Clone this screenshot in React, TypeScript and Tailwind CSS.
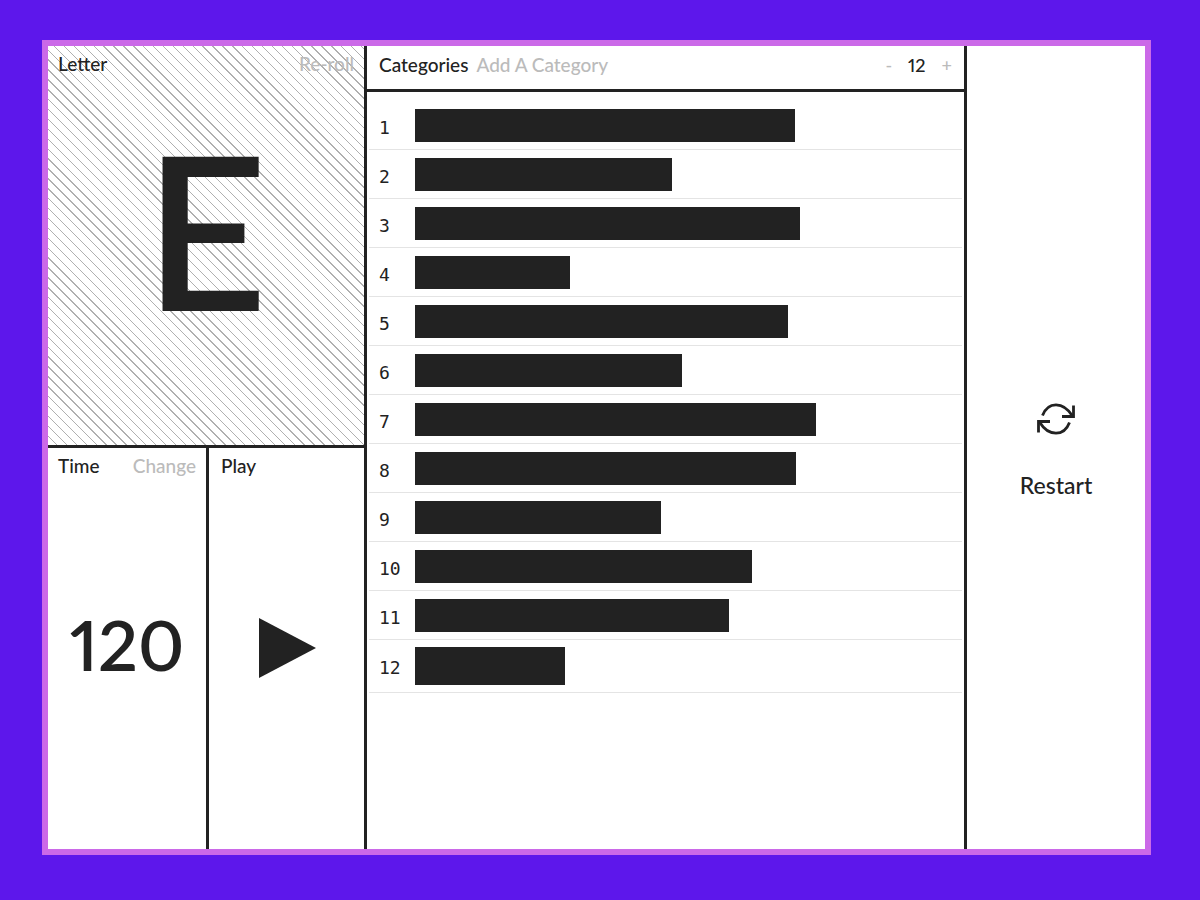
import { useState } from "react";

// width of each redaction bar, in % of its row
const categories = [
  { id: 1, width: 69.7 },
  { id: 2, width: 47.2 },
  { id: 3, width: 70.6 },
  { id: 4, width: 28.4 },
  { id: 5, width: 68.5 },
  { id: 6, width: 48.9 },
  { id: 7, width: 73.5 },
  { id: 8, width: 69.9 },
  { id: 9, width: 45.1 },
  { id: 10, width: 61.9 },
  { id: 11, width: 57.6 },
  { id: 12, width: 27.5 },
];

function RestartIcon() {
  return (
    <svg width="38" height="32" viewBox="0 0 38 32" fill="none" stroke="#222222" strokeWidth="2.8" aria-hidden="true">
      <path d="M5.500 12.500C8 6 12.500 1.800 19 1.800C26.500 1.800 31.500 6.500 35.500 13" />
      <path d="M36.500 2.500V13.500H25" />
      <path d="M32.500 19.500C30 26 25.500 30.200 19 30.200C11.500 30.200 6.500 25.500 2.500 19" />
      <path d="M1.500 29.500V18.500H13" />
    </svg>
  );
}

function Category({ id, width }: { id: number; width: number }) {
  return (
    <li className="flex h-[49px] border-b border-[#e4e4e4] pt-2 pb-[7px] pl-[10px] last:h-[53px] last:py-[7px]">
      <span className="flex w-9 shrink-0 items-center pt-1 font-['DejaVu_Sans_Mono',monospace] text-lg leading-6">{id}</span>
      <div className="flex-1 pr-[2px]">
        <div className="h-full bg-[#222222]" style={{ width: `${width}%` }} />
      </div>
    </li>
  );
}

export default function App() {
  const [count, setCount] = useState(12);

  return (
    <div className="flex min-h-screen bg-[#5d17eb] pt-10 pr-[49px] pb-[45px] pl-[42px] font-['Lato',sans-serif] text-[19px] leading-6 font-medium text-[#222222]">
      <main className="grid w-full grid-cols-[319fr_600fr_178fr] border-6 border-[#cb69e8] bg-white">
        <div className="grid grid-rows-2 border-r-3 border-[#222222]">
          <section className="flex flex-col border-b-3 border-[#222222] bg-[repeating-linear-gradient(45deg,#ffffff_0,#ffffff_6px,#b0b0b0_6px,#b0b0b0_7px)] px-[10px] py-[6px]">
            <div className="flex justify-between">
              <h2>Letter</h2>
              <button className="text-[#bbbbbb]">Re-roll</button>
            </div>
            <p className="flex flex-1 items-center justify-center pb-14 text-[214px] leading-none font-semibold">E</p>
          </section>
          <div className="grid grid-cols-[161fr_155fr]">
            <section className="flex flex-col border-r-3 border-[#222222] px-[10px] py-[6px]">
              <div className="flex justify-between">
                <h2>Time</h2>
                <button className="text-[#bbbbbb]">Change</button>
              </div>
              <p className="flex flex-1 items-center justify-center pb-8 text-[70px] leading-none font-semibold proportional-nums">120</p>
            </section>
            <section className="flex flex-col px-3 py-[6px]">
              <h2>Play</h2>
              <button aria-label="Play" className="flex flex-1 items-center justify-center pb-6">
                <svg width="58" height="62" viewBox="0 0 58 62" fill="#222222" aria-hidden="true">
                  <path d="M1 1L58 31L1 61Z" />
                </svg>
              </button>
            </section>
          </div>
        </div>
        <section className="border-r-3 border-[#222222]">
          <header className="flex h-[46px] items-start gap-2 border-b-3 border-[#222222] px-3 py-[7px]">
            <h2>Categories</h2>
            <button className="text-[#bbbbbb]">Add A Category</button>
            <div className="ml-auto flex gap-4 text-lg leading-6">
              <button aria-label="Fewer categories" className="text-[#bbbbbb]" onClick={() => setCount(Math.max(1, count - 1))}>-</button>
              <span className="proportional-nums">{count}</span>
              <button aria-label="More categories" className="text-[#bbbbbb]" onClick={() => setCount(Math.min(categories.length, count + 1))}>+</button>
            </div>
          </header>
          <ol className="mx-[2px] pt-[9px]">
            {categories.slice(0, count).map((c) => (
              <Category key={c.id} id={c.id} width={c.width} />
            ))}
          </ol>
        </section>
        <button className="flex flex-col items-center justify-center gap-[38px] pt-1 text-[23px]">
          <RestartIcon />
          Restart
        </button>
      </main>
    </div>
  );
}
